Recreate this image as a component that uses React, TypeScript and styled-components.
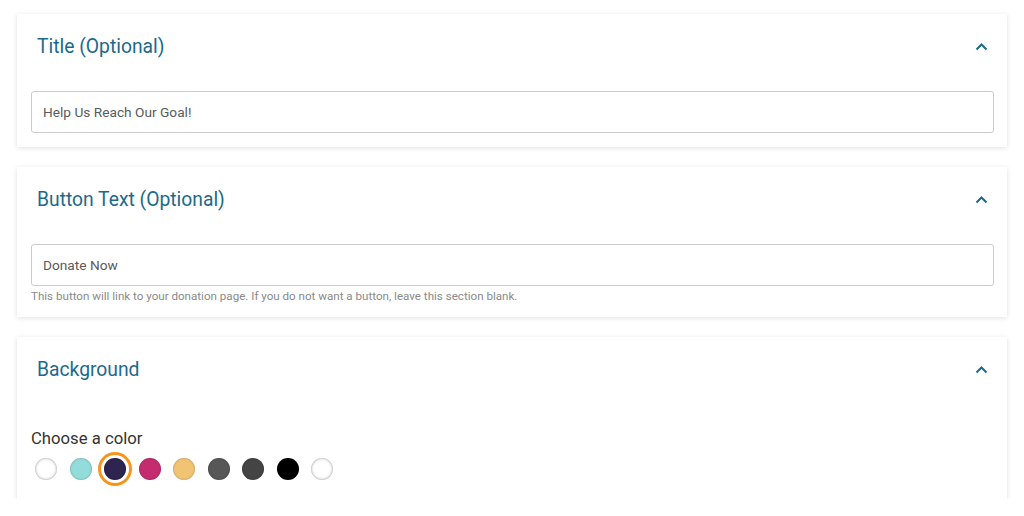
import styled, { createGlobalStyle } from 'styled-components';

const swatches = [
  { color: '#ffffff', light: true },
  { color: '#93dcd9' },
  { color: '#2e2450', selected: true },
  { color: '#c42c6f' },
  { color: '#f1c474' },
  { color: '#575757' },
  { color: '#444444' },
  { color: '#000000' },
  { color: '#ffffff', light: true },
];

const Chevron = () => (
  <svg width="13" height="8" viewBox="0 0 13 8" fill="none">
    <path d="M1.5 6.5L6.5 1.5L11.5 6.5" stroke="#1c6a8a" strokeWidth="2" />
  </svg>
);

const App = () => {
  return (
    <>
      <GlobalStyle />
      <Page>
        <Card>
          <Header>
            <Title>Title (Optional)</Title>
            <Chevron />
          </Header>
          <Body>
            <TextInput defaultValue="Help Us Reach Our Goal!" />
          </Body>
        </Card>

        <Card>
          <Header>
            <Title>Button Text (Optional)</Title>
            <Chevron />
          </Header>
          <Body>
            <TextInput defaultValue="Donate Now" />
            <Help>
              This button will link to your donation page. If you do not want a button, leave this
              section blank.
            </Help>
          </Body>
        </Card>

        <Card>
          <Header>
            <Title>Background</Title>
            <Chevron />
          </Header>
          <ColorBody>
            <Label>Choose a color</Label>
            <Swatches>
              {swatches.map((s, i) => (
                <Swatch key={i} $color={s.color} $light={s.light} $selected={s.selected} />
              ))}
            </Swatches>
          </ColorBody>
        </Card>
      </Page>
    </>
  );
};

export default App;

const GlobalStyle = createGlobalStyle`
  html, body {
    margin: 0;
    padding: 0;
    background: #ffffff;
    font-family: Roboto, 'Liberation Sans', sans-serif;
  }
`;

const Page = styled.div`
  display: flex;
  flex-direction: column;
  gap: 20px;
  padding: 14px 17px 0 17px;
`;

const Card = styled.section`
  background: #fff;
  box-shadow: 0 1px 5px rgba(0, 0, 0, 0.12);
`;

const Header = styled.div`
  display: flex;
  align-items: center;
  justify-content: space-between;
  height: 65px;
  padding: 0 19px 0 20px;
  box-sizing: border-box;
`;

const Title = styled.h2`
  margin: 0;
  font-size: 19.3px;
  font-weight: 400;
  color: #1c6a8a;
  line-height: 24px;
`;

const Body = styled.div`
  padding: 12px 13px 14px 14px;
`;

const TextInput = styled.input`
  display: block;
  width: 100%;
  box-sizing: border-box;
  height: 42px;
  padding: 0 11px;
  border: 1px solid #cccccc;
  border-radius: 3px;
  font-family: Roboto, 'Liberation Sans', sans-serif;
  font-size: 13.7px;
  color: #5a5a5a;
  outline: none;
`;

const Help = styled.div`
  margin-top: 3px;
  font-size: 11.6px;
  line-height: 14px;
  color: #8a8a8a;
`;

const ColorBody = styled.div`
  padding: 25px 13px 13px 14px;
`;

const Label = styled.div`
  font-size: 16.7px;
  line-height: 24px;
  color: #333;
`;

const Swatches = styled.div`
  display: flex;
  align-items: center;
  gap: 12.5px;
  height: 34px;
  margin-top: 1px;
  padding-left: 4px;
`;

const Swatch = styled.span<{ $color: string; $light?: boolean; $selected?: boolean }>`
  width: 22px;
  height: 22px;
  border-radius: 50%;
  background: ${(p) => p.$color};
  box-shadow: ${(p) =>
    p.$selected
      ? 'inset 0 0 2px rgba(0,0,0,0.4), 0 0 0 3px #fff, 0 0 0 6px #f7941d'
      : p.$light
        ? 'inset 0 0 3px rgba(0,0,0,0.45)'
        : 'inset 0 0 2px rgba(0,0,0,0.35)'};
`;
